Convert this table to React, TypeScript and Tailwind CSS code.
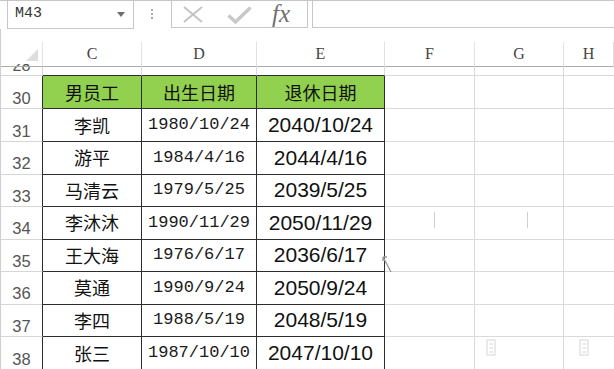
import React from "react";

type Row = { n: number; h: string; c: string; d: string; e: string };

const rows: Row[] = [
  { n: 31, h: "h-[33px]", c: "李凯", d: "1980/10/24", e: "2040/10/24" },
  { n: 32, h: "h-[32px]", c: "游平", d: "1984/4/16", e: "2044/4/16" },
  { n: 33, h: "h-[33px]", c: "马清云", d: "1979/5/25", e: "2039/5/25" },
  { n: 34, h: "h-[32px]", c: "李沐沐", d: "1990/11/29", e: "2050/11/29" },
  { n: 35, h: "h-[33px]", c: "王大海", d: "1976/6/17", e: "2036/6/17" },
  { n: 36, h: "h-[32px]", c: "莫通", d: "1990/9/24", e: "2050/9/24" },
  { n: 37, h: "h-[33px]", c: "李四", d: "1988/5/19", e: "2048/5/19" },
  { n: 38, h: "h-[33px]", c: "张三", d: "1987/10/10", e: "2047/10/10" },
];

const gridCols = "grid grid-cols-[42px_99px_115px_128px_90px_89px_1fr]";
const cjk = "font-['Noto_Sans_CJK_SC',sans-serif]";
const mono = "font-['Liberation_Mono',monospace]";
const sans = "font-['Liberation_Sans',Arial,sans-serif]";
const serif = "font-['Liberation_Serif',serif]";

function FormulaBar() {
  return (
    <div className="h-[29px] flex items-start border-t border-[#c6c6c6]">
      <div className="ml-[7px] w-[127px] h-[28px] border-x border-b border-[#c6c6c6] flex items-center">
        <span className={`${mono} text-[15px] text-[#333] ml-[7px] flex-1`}>M43</span>
        <span className="w-0 h-0 border-x-[4px] border-x-transparent border-t-[5px] border-t-[#6e6e6e] mr-[8px]" />
      </div>
      <div className="ml-[17px] mt-[8px] flex flex-col gap-[2px]">
        <span className="w-[2px] h-[2px] bg-[#a8a8a8]" />
        <span className="w-[2px] h-[2px] bg-[#a8a8a8]" />
        <span className="w-[2px] h-[2px] bg-[#a8a8a8]" />
      </div>
      <div className="ml-[18px] w-[137px] h-[27px] border-x border-b border-[#c6c6c6] flex items-center">
        <svg className="ml-[11px]" width="20" height="17" viewBox="0 0 20 17">
          <path d="M1 1 L19 16 M19 1 L1 16" stroke="#c4c4c4" strokeWidth="2" fill="none" />
        </svg>
        <svg className="ml-[24px] mt-[2px]" width="25" height="18" viewBox="0 0 25 18">
          <path d="M1.5 9.5 L8.5 16 L23.5 1.5" stroke="#c8c8c8" strokeWidth="3.4" fill="none" />
        </svg>
        <span className={`ml-[20px] ${serif} italic text-[25px] leading-[26px] text-[#707070]`}>fx</span>
      </div>
      <div className="ml-[4px] flex-1 h-[27px] border-l border-b border-[#c6c6c6]" />
    </div>
  );
}

function ColumnHeaders() {
  const letters = ["C", "D", "E", "F", "G", "H"];
  return (
    <div className={`${gridCols} h-[22px]`}>
      <div className="relative border-r border-b border-r-[#e2e2e2] border-b-[#ababab]">
        <span className="absolute right-[4px] bottom-[5px] w-0 h-0 border-l-[12px] border-l-transparent border-b-[12px] border-b-[#dedede]" />
      </div>
      {letters.map((l) => (
        <div
          key={l}
          className={`flex items-center justify-center border-r border-b border-r-[#e2e2e2] border-b-[#ababab] ${serif} text-[16px] text-[#444]`}
        >
          {l}
        </div>
      ))}
    </div>
  );
}

export default function App() {
  return (
    <div className="relative w-[614px] h-[369px] overflow-hidden bg-white">
      <FormulaBar />
      <div className="border-l border-[#cfcfcf]">
        <div className="h-[13px]" />
        <ColumnHeaders />

        {/* row 28, scrolled mostly out of view */}
        <div className={`${gridCols} h-[12px]`}>
          <div className="flex items-end justify-center border-r border-b border-[#d6d6d6] overflow-hidden">
            <span className={`${sans} text-[16px] leading-none text-[#555] pb-[1px]`}>28</span>
          </div>
          <div className="border-r border-b border-r-[#dadada] border-b-[#2d2d2d]" />
          <div className="border-r border-b border-r-[#dadada] border-b-[#2d2d2d]" />
          <div className="border-r border-b border-r-[#dadada] border-b-[#2d2d2d]" />
          <div className="border-r border-b border-[#dadada]" />
          <div className="border-r border-b border-[#dadada]" />
          <div className="border-b border-[#dadada]" />
        </div>

        {/* header row */}
        <div className={`${gridCols} h-[33px]`}>
          <div className="flex items-end justify-center border-r border-b border-r-[#2d2d2d] border-b-[#d6d6d6]">
            <span className={`${sans} text-[16.5px] leading-none text-[#555] pb-[2px]`}>30</span>
          </div>
          {["男员工", "出生日期", "退休日期"].map((t) => (
            <div
              key={t}
              className={`flex items-center justify-center bg-[#92d050] border-r border-b border-[#2d2d2d] ${cjk} text-[18px] text-[#111]`}
            >
              {t}
            </div>
          ))}
          <div className="border-r border-b border-[#dadada]" />
          <div className="border-r border-b border-[#dadada]" />
          <div className="border-b border-[#dadada]" />
        </div>

        {rows.map((r) => (
          <div key={r.n} className={`${gridCols} ${r.h}`}>
            <div className="flex items-end justify-center border-r border-b border-r-[#2d2d2d] border-b-[#d6d6d6]">
              <span className={`${sans} text-[16.5px] leading-none text-[#555] pb-[2px]`}>{r.n}</span>
            </div>
            <div className={`flex items-center justify-center border-r border-b border-[#2d2d2d] ${cjk} text-[18px] text-[#111]`}>
              {r.c}
            </div>
            <div className={`flex items-center justify-center border-r border-b border-[#2d2d2d] ${mono} text-[17px] text-[#1a1a1a]`}>
              {r.d}
            </div>
            <div className={`flex items-center justify-center border-r border-b border-[#2d2d2d] ${sans} text-[21px] text-[#111]`}>
              {r.e}
            </div>
            <div className="border-r border-b border-[#dadada]" />
            <div className="border-r border-b border-[#dadada]" />
            <div className="border-b border-[#dadada]" />
          </div>
        ))}
      </div>

      {/* pointer left on the sheet */}
      <svg className="absolute left-[381px] top-[254px]" width="12" height="20" viewBox="0 0 12 20">
        <path d="M2 3 L10 18 M2 3 L6 3 M2 3 L2 7" stroke="#9a9a9a" strokeWidth="1.4" fill="none" />
      </svg>

      {/* faint paste markers */}
      <svg className="absolute left-[485px] top-[339px]" width="14" height="20" viewBox="0 0 14 20">
        <path d="M2 1 H10 V16 H2 Z M4.5 5 H8 M4.5 9 H8 M4.5 13 H8" stroke="#e4e4e4" strokeWidth="1.5" fill="none" />
      </svg>
      <svg className="absolute left-[578px] top-[339px]" width="14" height="20" viewBox="0 0 14 20">
        <path d="M2 1 H10 V16 H2 Z M4.5 5 H8 M4.5 9 H8 M4.5 13 H8" stroke="#e4e4e4" strokeWidth="1.5" fill="none" />
      </svg>

      {/* faint specks */}
      <span className="absolute left-[434px] top-[212px] w-[1px] h-[16px] bg-[#d0d0d0]" />
      <span className="absolute left-[527px] top-[212px] w-[1px] h-[16px] bg-[#d0d0d0]" />
    </div>
  );
}
